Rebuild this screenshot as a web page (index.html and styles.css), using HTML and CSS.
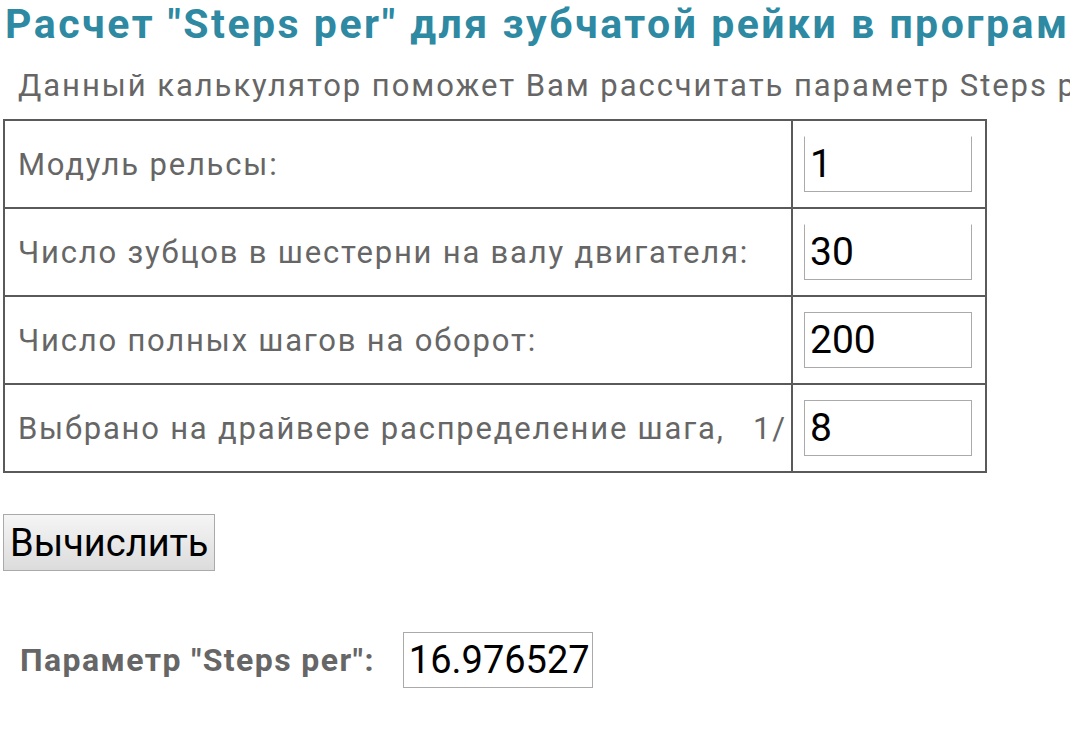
FILE: index.html
```html
<!DOCTYPE html>
<html lang="ru">
<head>
<meta charset="utf-8">
<link rel="stylesheet" href="styles.css">
</head>
<body>
<div class="page">
  <h1 class="title">Расчет "Steps per" для зубчатой рейки в программе</h1>
  <p class="intro">Данный калькулятор поможет Вам рассчитать параметр Steps per</p>
  <table class="calc">
    <tr><td class="label">Модуль рельсы:</td><td class="field"><span class="input in-notop">1</span></td></tr>
    <tr><td class="label">Число зубцов в шестерни на валу двигателя:</td><td class="field"><span class="input in-notop">30</span></td></tr>
    <tr><td class="label">Число полных шагов на оборот:</td><td class="field"><span class="input">200</span></td></tr>
    <tr><td class="label">Выбрано на драйвере распределение шага, &nbsp; 1/</td><td class="field"><span class="input">8</span></td></tr>
  </table>
  <div class="actions"><button class="btn">Вычислить</button></div>
  <div class="result">
    <span class="result-label">Параметр "Steps per":</span>
    <span class="result-box">16.976527</span>
  </div>
</div>
</body>
</html>
```

FILE: styles.css
```css
html, body {
  margin: 0;
  padding: 0;
  background: #fff;
  overflow: hidden;
}
body {
  font-family: Roboto, "Noto Sans", sans-serif;
  width: 1070px;
  height: 750px;
}
.page {
  padding-left: 3px;
  white-space: nowrap;
  overflow: hidden;
}
.title {
  margin: 0;
  padding-left: 2px;
  font-size: 41px;
  line-height: 48px;
  font-weight: 700;
  letter-spacing: 2.5px;
  color: #2e89a2;
}
.intro {
  margin: 18px 0 13px;
  padding-left: 15px;
  font-size: 31px;
  line-height: 40px;
  letter-spacing: 1.95px;
  color: #666;
}
.calc {
  border-collapse: collapse;
  width: 984px;
  border: 2px solid #777;
}
.calc td {
  border: 2px solid #5a5a5a;
  height: 86px;
  padding: 0;
}
.label {
  width: 773px;
  padding-left: 13px !important;
  font-size: 31px;
  letter-spacing: 1.8px;
  color: #666;
}
.field {
  padding: 0 13px 0 11px !important;
}
.input {
  display: flex;
  align-items: center;
  box-sizing: border-box;
  width: 168px;
  height: 56px;
  border: 1px solid #aaa;
  padding-left: 5px;
  font-size: 39px;
  color: #000;
}
.in-notop {
  border-top-color: transparent;
}
.actions {
  margin-top: 41px;
}
.btn {
  box-sizing: border-box;
  width: 212px;
  height: 57px;
  margin: 0;
  padding: 0 0 0 6px;
  border: 1px solid #aaa;
  border-radius: 0;
  background: linear-gradient(#f5f5f5, #dcdcdc);
  font-family: Roboto, "Noto Sans", sans-serif;
  font-size: 38px;
  color: #000;
  text-align: left;
}
.result {
  display: flex;
  align-items: center;
  margin-top: 61px;
  padding-left: 17px;
}
.result-label {
  font-size: 32px;
  font-weight: 700;
  letter-spacing: 1.4px;
  color: #666;
  margin-right: 28px;
}
.result-box {
  box-sizing: border-box;
  width: 190px;
  height: 56px;
  border: 1px solid #aaa;
  display: flex;
  align-items: center;
  padding-left: 5px;
  font-size: 38px;
  color: #000;
}
```
